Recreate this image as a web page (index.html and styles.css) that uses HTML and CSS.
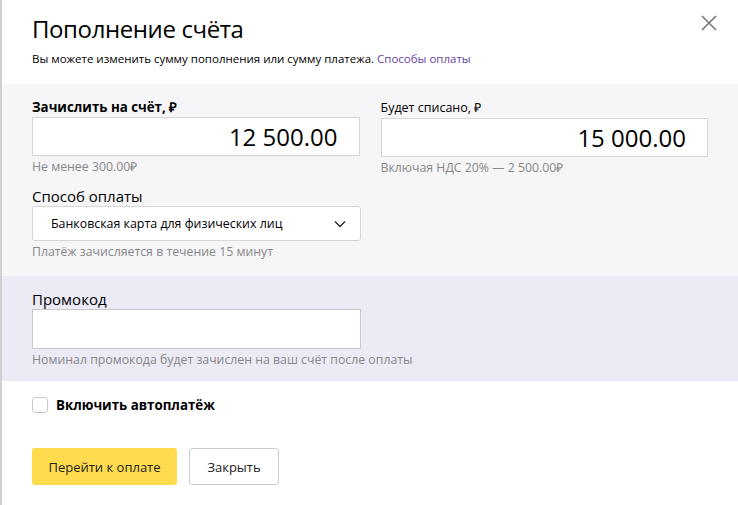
FILE: index.html
```html
<!DOCTYPE html>
<html lang="ru">
<head>
    <meta charset="UTF-8">
    <title>Пополнение счёта</title>
    <link rel="stylesheet" href="styles.css">
</head>
<body>
    <div class="modal">
        <button class="close" aria-label="Закрыть">
            <svg width="16" height="16" viewBox="0 0 16 16"><path d="M1 1L15 15M15 1L1 15" stroke="#777" stroke-width="1.6" fill="none"/></svg>
        </button>

        <header class="head">
            <h1>Пополнение счёта</h1>
            <p class="sub">Вы можете изменить сумму пополнения или сумму платежа. <a href="#">Способы оплаты</a></p>
        </header>

        <section class="amounts">
            <div class="row">
                <div class="field">
                    <label class="label bold">Зачислить на счёт, ₽</label>
                    <div class="money">12 500.00</div>
                    <div class="hint">Не менее 300.00₽</div>
                </div>
                <div class="field">
                    <label class="label small">Будет списано, ₽</label>
                    <div class="money">15 000.00</div>
                    <div class="hint">Включая НДС 20% — 2 500.00₽</div>
                </div>
            </div>

            <div class="field method">
                <label class="label">Способ оплаты</label>
                <div class="select">
                    <span>Банковская карта для физических лиц</span>
                    <svg width="12" height="8" viewBox="0 0 12 8"><path d="M1 1.5L6 6.5L11 1.5" stroke="#222" stroke-width="1.3" fill="none"/></svg>
                </div>
                <div class="hint">Платёж зачисляется в течение 15 минут</div>
            </div>
        </section>

        <section class="promo">
            <div class="field">
                <label class="label">Промокод</label>
                <div class="text-input"></div>
                <div class="hint">Номинал промокода будет зачислен на ваш счёт после оплаты</div>
            </div>
        </section>

        <label class="check">
            <span class="box"></span>
            <span>Включить автоплатёж</span>
        </label>

        <div class="actions">
            <button class="btn btn-yellow">Перейти к оплате</button>
            <button class="btn btn-plain">Закрыть</button>
        </div>
    </div>
</body>
</html>
```

FILE: styles.css
```css
body {
    margin: 0;
    font-family: 'Open Sans', Arial, sans-serif;
    color: #000;
    background-color: #fff;
}

.modal {
    position: relative;
    width: 738px;
    height: 505px;
    border-left: 2px solid #d0d0d0;
    box-sizing: border-box;
    overflow: hidden;
}

.close {
    position: absolute;
    top: 15px;
    right: 21px;
    padding: 0;
    border: none;
    background: none;
    width: 16px;
    height: 16px;
}

.head {
    padding: 14px 30px 0;
    height: 70px;
}

h1 {
    margin: 0;
    font-size: 24px;
    font-weight: 400;
    line-height: 30px;
    letter-spacing: -0.4px;
}

.sub {
    margin: 7px 0 0;
    font-size: 11.5px;
    line-height: 16px;
}

.sub a {
    color: #6b3fa0;
    text-decoration: none;
}

.amounts {
    background-color: #f6f5f8;
    padding: 13px 30px 12px;
    height: 192px;
    box-sizing: border-box;
}

.row {
    display: flex;
    gap: 21px;
}

.field {
    width: 329px;
}

.label {
    display: block;
    font-size: 15px;
    line-height: 20px;
}

.label.bold {
    font-weight: 700;
    font-size: 13.3px;
}

.label.small {
    font-size: 12.5px;
    padding-top: 1px;
}

.money {
    height: 39px;
    box-sizing: border-box;
    border: 1px solid #d6d6d6;
    background-color: #fff;
    text-align: right;
    font-size: 24px;
    line-height: 37px;
    padding-right: 21px;
}

.hint {
    font-size: 12.3px;
    line-height: 16px;
    color: #888;
    margin-top: 3px;
    white-space: nowrap;
}

.method {
    margin-top: 10px;
}

.select {
    height: 35px;
    box-sizing: border-box;
    border: 1px solid #d6d6d6;
    border-radius: 3px;
    background-color: #fff;
    display: flex;
    align-items: center;
    justify-content: space-between;
    padding: 0 14px 0 18px;
    font-size: 12.4px;
}

.promo {
    background-color: #ebeaf5;
    padding: 13px 30px 0;
    height: 105px;
    box-sizing: border-box;
}

.text-input {
    height: 40px;
    box-sizing: border-box;
    border: 1px solid #c8c8c8;
    background-color: #fff;
}

.check {
    display: flex;
    align-items: center;
    gap: 8px;
    margin: 15px 30px 0;
    font-size: 13.3px;
    font-weight: 700;
}

.box {
    width: 14px;
    height: 14px;
    border: 1px solid #c8c8c8;
    border-radius: 3px;
    background-color: #fff;
}

.actions {
    display: flex;
    gap: 12px;
    margin: 34px 30px 0;
}

.btn {
    height: 37px;
    border-radius: 3px;
    font-family: inherit;
    font-size: 13px;
    color: #222;
    cursor: pointer;
}

.btn-yellow {
    width: 145px;
    background-color: #ffdb4d;
    border: none;
}

.btn-plain {
    width: 90px;
    background-color: #fff;
    border: 1px solid #ccc;
}
```
